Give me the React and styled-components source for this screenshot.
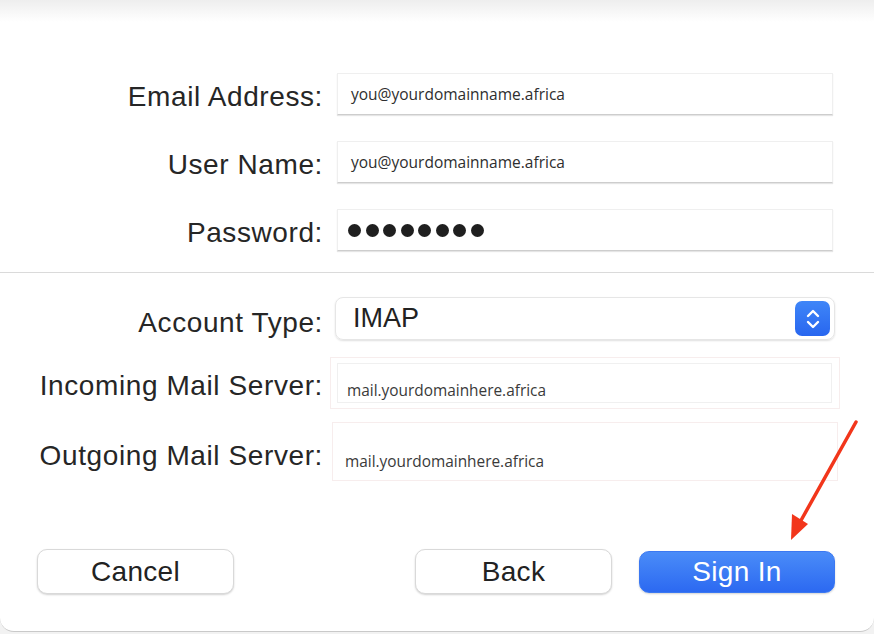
import React from "react";
import styled, { createGlobalStyle } from "styled-components";

const GlobalStyle = createGlobalStyle`
  html, body {
    margin: 0;
    padding: 0;
    background: #f2f2f2;
    overflow: hidden;
  }
  * {
    box-sizing: border-box;
  }
`;

const Window = styled.div`
  position: relative;
  width: 874px;
  height: 632px;
  background: linear-gradient(#eeeeee 0px, #ffffff 22px);
  border-bottom: 1px solid #c9c9c9;
  border-radius: 0 0 14px 14px;
  font-family: "Liberation Sans", Arial, sans-serif;
  color: #262626;
  padding-top: 73px;
`;

const Form = styled.div`
  display: flex;
  flex-direction: column;
`;

const Row = styled.div`
  display: grid;
  grid-template-columns: 323px 1fr;
  column-gap: 10px;
  align-items: center;
  padding-right: 41px;
  margin-top: ${(p) => p.$top || 0}px;
`;

const Label = styled.label`
  text-align: right;
  font-size: 28px;
  letter-spacing: 0.6px;
  padding-top: ${(p) => p.$drop || 5}px;
  white-space: nowrap;
`;

const Field = styled.div`
  display: flex;
  align-items: center;
  height: 42px;
  margin-left: 4px;
  padding-left: 13px;
  background: #fff;
  border: 1px solid #efefef;
  border-bottom: 1px solid #cdcdcd;
  box-shadow: 0 1px 1px rgba(0, 0, 0, 0.1);
  font-family: "Open Sans", "Liberation Sans", sans-serif;
  font-size: 15.5px;
  color: #2e2e2e;
`;

const Dots = styled.div`
  display: flex;
  gap: 4.5px;
  margin-left: -3px;
`;

const Dot = styled.span`
  width: 13px;
  height: 13px;
  border-radius: 50%;
  background: #1f1f1f;
`;

const Divider = styled.hr`
  margin: 21px 0 0;
  border: none;
  height: 1px;
  background: #dadada;
`;

const Popup = styled.div`
  display: flex;
  align-items: center;
  justify-content: space-between;
  height: 43px;
  margin-left: 2px;
  margin-right: -2px;
  padding: 0 4px 0 17px;
  border-radius: 8px;
  border: 1px solid #e6e6e6;
  box-shadow: 0 1px 2px rgba(0, 0, 0, 0.13);
  font-size: 27px;
  color: #222;
`;

const Stepper = styled.span`
  display: flex;
  align-items: center;
  justify-content: center;
  width: 35px;
  height: 35px;
  border-radius: 7px;
  background: linear-gradient(#3f86f8, #2866ef);
`;

const ServerBox = styled.div`
  display: flex;
  align-items: center;
  height: ${(p) => p.$height}px;
  margin-left: ${(p) => p.$left}px;
  margin-right: ${(p) => p.$right}px;
  padding: ${(p) => (p.$inner ? "5px 7px 5px 6px" : "20px 0 0 12px")};
  border: 1px solid #f7eded;
  font-family: "Open Sans", "Liberation Sans", sans-serif;
  font-size: 15.4px;
  color: #3a3a3a;
`;

const InnerField = styled.div`
  flex: 1;
  height: 100%;
  display: flex;
  align-items: center;
  padding: 14px 0 0 9px;
  border: 1px solid #f0f0f0;
`;

const Footer = styled.div`
  display: flex;
  align-items: center;
  padding: 0 39px 0 37px;
  margin-top: 68px;
`;

const Button = styled.button`
  width: ${(p) => p.$width || 197}px;
  height: ${(p) => (p.$primary ? 42 : 45)}px;
  margin-right: ${(p) => p.$gap || 0}px;
  border-radius: 10px;
  font-family: "Liberation Sans", Arial, sans-serif;
  font-size: 28px;
  letter-spacing: 0.3px;
  color: ${(p) => (p.$primary ? "#ffffff" : "#222222")};
  background: ${(p) =>
    p.$primary ? "linear-gradient(#4a8cf8, #2c69f1)" : "#ffffff"};
  border: 1px solid ${(p) => (p.$primary ? "#3b78f2" : "#d9d9d9")};
  box-shadow: 0 1px 2px rgba(0, 0, 0, 0.18);
  cursor: pointer;
`;

const Spacer = styled.div`
  flex: 1;
`;

const Arrow = styled.svg`
  position: absolute;
  left: 0;
  top: 0;
  width: 874px;
  height: 634px;
  pointer-events: none;
`;

const ChevronStepper = () => (
  <svg width="16" height="24" viewBox="0 0 16 24">
    <path
      d="M3 9 L8 4 L13 9 M3 15 L8 20 L13 15"
      fill="none"
      stroke="#fff"
      strokeWidth="2.4"
      strokeLinecap="round"
      strokeLinejoin="round"
    />
  </svg>
);

export default function App() {
  return (
    <>
      <GlobalStyle />
      <Window>
        <Form>
          <Row>
            <Label>Email Address:</Label>
            <Field>you@yourdomainname.africa</Field>
          </Row>
          <Row $top={26}>
            <Label>User Name:</Label>
            <Field>you@yourdomainname.africa</Field>
          </Row>
          <Row $top={26}>
            <Label>Password:</Label>
            <Field>
              <Dots>
                {Array.from({ length: 8 }).map((_, i) => (
                  <Dot key={i} />
                ))}
              </Dots>
            </Field>
          </Row>
        </Form>

        <Divider />

        <Form>
          <Row $top={24}>
            <Label $drop={8}>Account Type:</Label>
            <Popup>
              IMAP
              <Stepper>
                <ChevronStepper />
              </Stepper>
            </Popup>
          </Row>
          <Row $top={17}>
            <Label>Incoming Mail Server:</Label>
            <ServerBox $inner $height={52} $left={-3} $right={-7}>
              <InnerField>mail.yourdomainhere.africa</InnerField>
            </ServerBox>
          </Row>
          <Row $top={13}>
            <Label $drop={8}>Outgoing Mail Server:</Label>
            <ServerBox $height={59} $left={-1} $right={-5}>
              mail.yourdomainhere.africa
            </ServerBox>
          </Row>
        </Form>

        <Footer>
          <Button>Cancel</Button>
          <Spacer />
          <Button $gap={27}>Back</Button>
          <Button $primary $width={196}>
            Sign In
          </Button>
        </Footer>

        <Arrow viewBox="0 0 874 634">
          <line
            x1="856"
            y1="422"
            x2="799"
            y2="524"
            stroke="#f2361b"
            strokeWidth="3.5"
            strokeLinecap="round"
          />
          <polygon points="791,540 792,514 808,524" fill="#f2361b" />
        </Arrow>
      </Window>
    </>
  );
}
